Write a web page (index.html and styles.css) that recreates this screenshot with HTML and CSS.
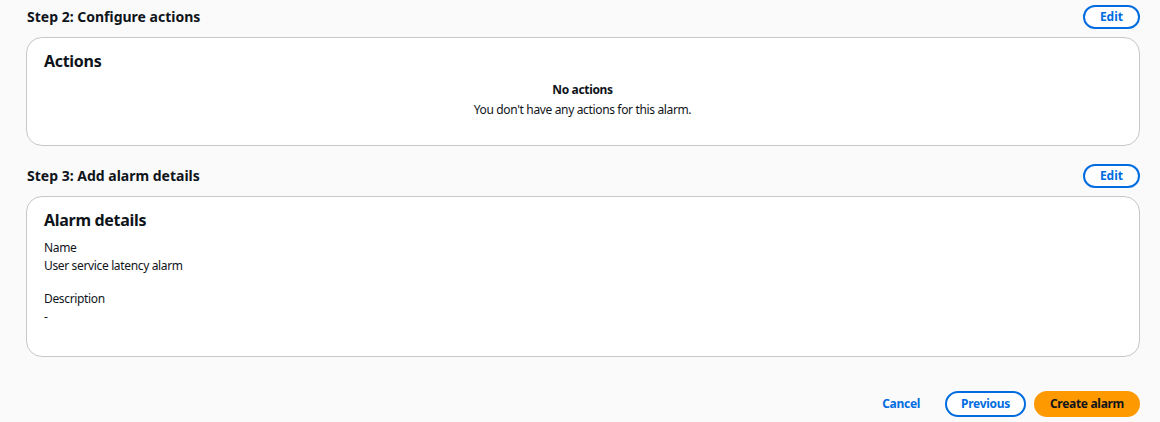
FILE: index.html
```html
<!DOCTYPE html>
<html lang="en">
<head>
<meta charset="utf-8">
<title>Create alarm - review</title>
<link rel="stylesheet" href="styles.css">
</head>
<body>
<main class="page">
  <section class="step">
    <div class="step-header">
      <h2 class="step-title">Step 2: Configure actions</h2>
      <button class="btn btn-normal btn-small" type="button">Edit</button>
    </div>
    <div class="card card-actions">
      <h3 class="card-title">Actions</h3>
      <div class="empty">
        <div class="empty-title">No actions</div>
        <div class="empty-text">You don't have any actions for this alarm.</div>
      </div>
    </div>
  </section>

  <section class="step">
    <div class="step-header">
      <h2 class="step-title">Step 3: Add alarm details</h2>
      <button class="btn btn-normal btn-small" type="button">Edit</button>
    </div>
    <div class="card card-details">
      <h3 class="card-title">Alarm details</h3>
      <dl class="kv">
        <div class="kv-item">
          <dt class="kv-label">Name</dt>
          <dd class="kv-value">User service latency alarm</dd>
        </div>
        <div class="kv-item">
          <dt class="kv-label">Description</dt>
          <dd class="kv-value">-</dd>
        </div>
      </dl>
    </div>
  </section>

  <div class="footer">
    <button class="btn btn-link" type="button">Cancel</button>
    <button class="btn btn-normal" type="button">Previous</button>
    <button class="btn btn-primary" type="button">Create alarm</button>
  </div>
</main>
</body>
</html>
```

FILE: styles.css
```css
* {
  box-sizing: border-box;
}

html, body {
  margin: 0;
  padding: 0;
  background: #fafafa;
}

body {
  font-family: "Noto Sans", "Open Sans", Arial, sans-serif;
  color: #0f141a;
  font-size: 12px;
  line-height: 18px;
  letter-spacing: -0.35px;
}

.page {
  padding: 5px 20px 0 26px;
  display: flex;
  flex-direction: column;
  gap: 18px;
}

.step-header {
  display: flex;
  align-items: center;
  justify-content: space-between;
  margin-bottom: 8px;
  height: 24px;
}

.step-title {
  margin: 0;
  font-size: 14px;
  line-height: 20px;
  font-weight: 700;
  padding-left: 1px;
  letter-spacing: 0;
}

.card {
  background: #ffffff;
  border: 1px solid #c6c6cd;
  border-radius: 16px;
  padding: 12px 18px 0 17px;
}

.card-actions {
  height: 109px;
}

.card-details {
  height: 161px;
}

.card-title {
  margin: 0;
  font-size: 16px;
  line-height: 22px;
  font-weight: 700;
  letter-spacing: -0.3px;
}

.empty {
  margin-top: 8px;
  text-align: center;
}

.empty-title {
  font-weight: 700;
  line-height: 20px;
}

.empty-text {
  line-height: 20px;
}

.kv {
  margin: 8px 0 0;
  display: flex;
  flex-direction: column;
  gap: 15px;
}

.kv-item {
  display: flex;
  flex-direction: column;
}

.kv-label,
.kv-value {
  margin: 0;
}

.footer {
  display: flex;
  justify-content: flex-end;
  align-items: center;
  gap: 8px;
  margin-top: 16px;
}

.btn {
  font-family: inherit;
  font-size: 12px;
  font-weight: 700;
  line-height: 18px;
  border-radius: 20px;
  height: 26px;
  padding: 0 14px;
  cursor: pointer;
  letter-spacing: -0.3px;
}

.btn-small {
  height: 24px;
  padding: 0 15px;
  letter-spacing: 0;
}

.btn-normal {
  background: #ffffff;
  color: #006ce0;
  border: 2px solid #006ce0;
}

.btn-primary {
  background: #ff9900;
  color: #0f141a;
  border: 2px solid #ff9900;
}

.btn-link {
  background: transparent;
  color: #006ce0;
  border: 2px solid transparent;
  padding: 0 15px;
}
```
